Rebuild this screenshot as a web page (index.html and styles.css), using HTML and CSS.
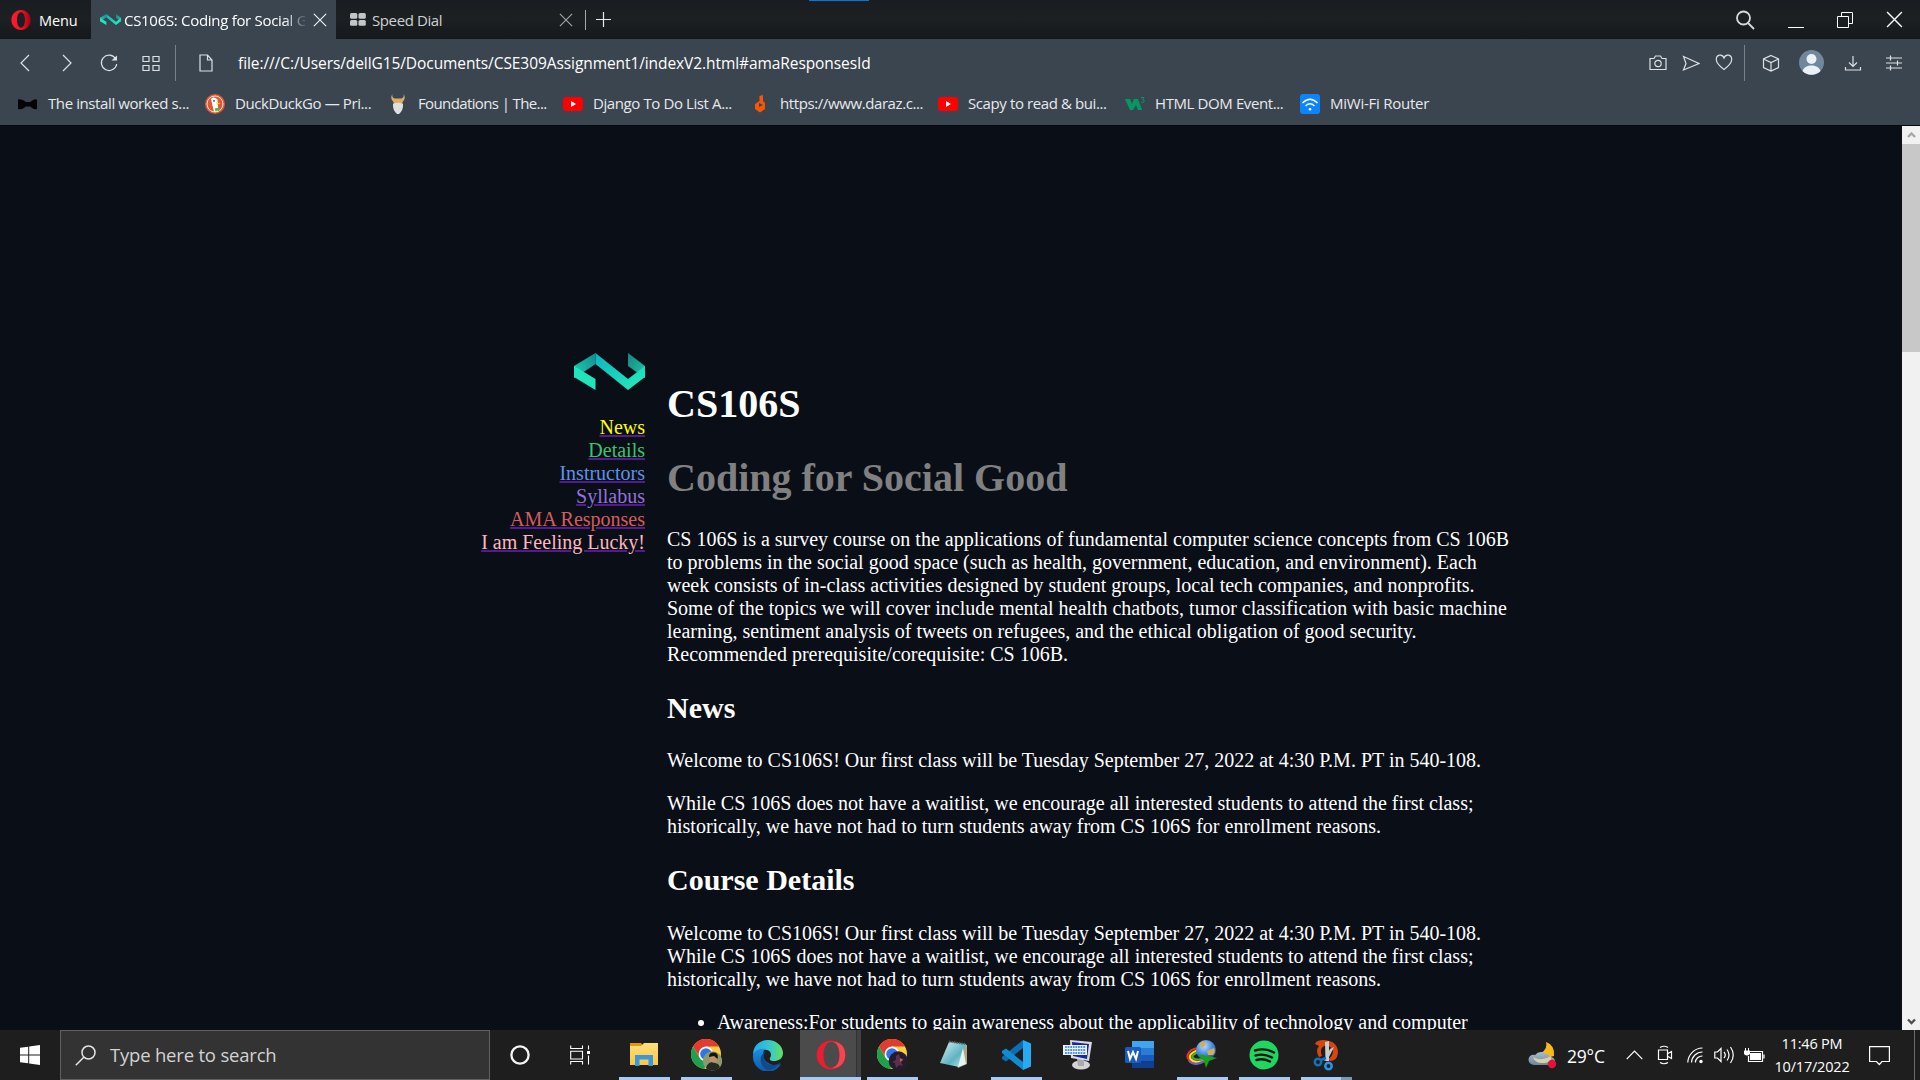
FILE: index.html
```html
<!DOCTYPE html>
<html lang="en">
<head>
<meta charset="utf-8">
<title>CS106S: Coding for Social Good</title>
<link rel="stylesheet" href="styles.css">
</head>
<body>
<svg class="defs" width="0" height="0">
  <defs>
    <linearGradient id="gBand" x1="0" y1="0" x2="1" y2="1"><stop offset="0" stop-color="#0fb3bd"/><stop offset="1" stop-color="#22f0bd"/></linearGradient>
    <linearGradient id="gDark" x1="0" y1="1" x2="1" y2="0"><stop offset="0" stop-color="#22d3ae"/><stop offset="1" stop-color="#0e8b94"/></linearGradient>
    <linearGradient id="gRight" x1="0" y1="0" x2="1" y2="1"><stop offset="0" stop-color="#15857f"/><stop offset="1" stop-color="#22c7a4"/></linearGradient>
    <linearGradient id="gOpera" x1="0" y1="0" x2="1" y2="0"><stop offset="0" stop-color="#ff1b2d"/><stop offset=".5" stop-color="#f0142a"/><stop offset="1" stop-color="#a70014"/></linearGradient>
    <linearGradient id="gEdge" x1="0" y1="0" x2="1" y2="0"><stop offset="0" stop-color="#2aa7e8"/><stop offset=".55" stop-color="#35c8d0"/><stop offset="1" stop-color="#62e25a"/></linearGradient>
    <linearGradient id="gEdgeB" x1="0" y1="0" x2="0" y2="1"><stop offset="0" stop-color="#1a8fe0"/><stop offset="1" stop-color="#0c59a8"/></linearGradient>
    <linearGradient id="gFolder" x1="0" y1="0" x2="0" y2="1"><stop offset="0" stop-color="#ffdf7e"/><stop offset="1" stop-color="#fbc643"/></linearGradient>
    <linearGradient id="gPad" x1="0" y1="0" x2="1" y2="1"><stop offset="0" stop-color="#d5f0f4"/><stop offset=".6" stop-color="#5fb3c2"/><stop offset="1" stop-color="#c9e9ee"/></linearGradient>
    <linearGradient id="gCloud" x1="0" y1="0" x2="0" y2="1"><stop offset="0" stop-color="#a9bccd"/><stop offset="1" stop-color="#71859a"/></linearGradient>
    <radialGradient id="gGlobe" cx=".4" cy=".3" r=".8"><stop offset="0" stop-color="#b9dcff"/><stop offset=".5" stop-color="#4d8fe0"/><stop offset="1" stop-color="#173f8f"/></radialGradient>
    <symbol id="ribbon" viewBox="0 0 71 37">
      <path d="M0 13 21.500 0V11L8 20 0 25Z" fill="url(#gDark)"/>
      <path d="M0 13V24L21.500 37V26Z" fill="#20e5bb"/>
      <path d="M54 0 71 13V25L54 13Z" fill="url(#gRight)"/>
      <path d="M71 13V24L54 37 21.500 11V0L54 26Z" fill="url(#gBand)"/>
    </symbol>
    <symbol id="cross" viewBox="0 0 16 16"><path d="M1 1 15 15M15 1 1 15" fill="none" stroke="currentColor" stroke-width="1.300"/></symbol>
    <symbol id="tube" viewBox="0 0 20 20"><rect y="3" width="20" height="14" rx="3.500" fill="#f00"/><path d="M8 7v6l5-3z" fill="#fff"/></symbol>
    <symbol id="chrome" viewBox="0 0 32 32">
      <circle cx="15" cy="15" r="15" fill="#ffcd40"/>
      <path d="M2 7.500 8.500 18.500 15 22 13.500 30A15 15 0 0 1 2 7.500Z" fill="#1fa04d"/>
      <path d="M2 7.500A15 15 0 0 1 28 7.500H15L8.500 18Z" fill="#e33b2e"/>
      <circle cx="15" cy="15" r="7.400" fill="#fff"/><circle cx="15" cy="15" r="5.800" fill="#2f74e8"/>
    </symbol>
  </defs>
</svg>
<div class="desktop">
  <header class="titlebar">
    <div class="screen-edge"></div>
    <div class="menu">
      <svg width="20" height="20" viewBox="0 0 20 20"><path fill="url(#gOpera)" fill-rule="evenodd" d="M10 0c5.500 0 9.600 4.400 9.600 10S15.500 20 10 20 .4 15.600.4 10 4.500 0 10 0Zm0 2.300C7.600 2.300 6 5.800 6 10s1.600 7.700 4 7.700 4-3.500 4-7.700-1.600-7.700-4-7.700Z"/></svg>
      <span>Menu</span>
    </div>
    <div class="tab tab-active">
      <svg width="21" height="11"><use href="#ribbon"/></svg>
      <span class="tab-title fade">CS106S: Coding for Social Good</span>
      <svg class="tab-close" width="14" height="14"><use href="#cross"/></svg>
    </div>
    <div class="tab">
      <svg width="16" height="13" viewBox="0 0 16 13" fill="#c3c6c9"><rect width="7.300" height="5.800" rx="1.500"/><rect x="8.500" width="7.300" height="5.800" rx="1.500"/><rect y="7" width="7.300" height="5.800" rx="1.500"/><rect x="8.500" y="7" width="7.300" height="5.800" rx="1.500"/></svg>
      <span class="tab-title">Speed Dial</span>
      <svg class="tab-close" width="14" height="14"><use href="#cross"/></svg>
    </div>
    <div class="tab-sep"></div>
    <svg class="plus" width="15" height="15" viewBox="0 0 15 15"><path d="M7.500 0V15M0 7.500H15" stroke="#e8eaeb" stroke-width="1.200"/></svg>
    <div class="window-controls">
      <svg width="20" height="20" viewBox="0 0 20 20" fill="none" stroke="#d6dadc" stroke-width="1.800"><circle cx="8.500" cy="8" r="6.500"/><path d="m13 13 6 6"/></svg>
      <svg width="16" height="16" viewBox="0 0 16 16" stroke="#fff"><path d="M0 15.500H16"/></svg>
      <svg width="16" height="16" viewBox="0 0 16 16" fill="none" stroke="#fff"><path d="M.5 4.500H11.500V15.500H.5ZM4.500 4V.5H15.500V11.500H12"/></svg>
      <svg width="17" height="17"><use href="#cross"/></svg>
    </div>
  </header>

  <div class="toolbar">
    <div class="nav-buttons">
      <svg width="20" height="20" viewBox="0 0 20 20"><path d="M14 2 6 10l8 8"/></svg>
      <svg width="20" height="20" viewBox="0 0 20 20"><path d="m6 2 8 8-8 8"/></svg>
      <svg width="20" height="20" viewBox="0 0 20 20"><path d="M16.500 5.500A7.700 7.700 0 1 0 17.700 11"/><path d="M18 2.500V7.500H12.500Z" fill="#dfe3e6" stroke="none"/></svg>
      <svg width="20" height="20" viewBox="0 0 20 20"><path d="M2 3.500H8V8.500H2ZM12 3.500H18V8.500H12ZM2 12.500H8V17.500H2ZM12 12.500H18V17.500H12Z"/></svg>
    </div>
    <div class="bar-sep"></div>
    <svg class="file-icon" width="14" height="18" viewBox="0 0 14 18"><path d="M1 1H8.500L13 6V17H1ZM8.500 1V6H13"/></svg>
    <span class="url">file:///C:/Users/dellG15/Documents/CSE309Assignment1/indexV2.html#amaResponsesId</span>
    <div class="page-actions">
      <svg width="18" height="18" viewBox="0 0 18 18"><path d="M1 4.500H5L6.500 2H11.500L13 4.500H17V15.500H1Z"/><circle cx="9" cy="9.500" r="3.200"/></svg>
      <svg width="18" height="18" viewBox="0 0 18 18"><path d="M1.500 2.500 17 9.500 1.500 16 4 9.500Z"/></svg>
      <svg width="18" height="18" viewBox="0 0 18 18"><path d="M9 15.500C5 12.500 1.300 9 1.300 5.500c0-5 6-6 7.700-1.500 1.700-4.500 7.700-3.500 7.700 1.500C16.700 9 13 12.500 9 15.500Z"/></svg>
    </div>
    <div class="bar-sep"></div>
    <div class="browser-actions">
      <svg width="18" height="18" viewBox="0 0 18 18"><path d="M9 1.500 16.500 5V13.500L9 17 1.500 13.500V5ZM1.500 5 9 8.500 16.500 5M9 8.500V17"/></svg>
      <svg width="25" height="25" viewBox="0 0 25 25" stroke="none"><circle cx="12.500" cy="12.500" r="12.500" fill="#71879c"/><circle cx="12.500" cy="9" r="5" fill="#eaf1f7"/><path d="M3.500 21C5 17 8.500 15.500 12.500 15.500S20 17 21.500 21A12.500 12.500 0 0 1 3.500 21Z" fill="#eaf1f7"/></svg>
      <svg width="18" height="18" viewBox="0 0 18 18"><path d="M9 2V12M5 8.500 9 12.500 13 8.500M1.500 13V16H16.500V13"/></svg>
      <svg width="18" height="18" viewBox="0 0 18 18"><path d="M1 4H17M1 9H17M1 14H17M5.500 1.500V6.500M12.500 6.500V11.500M5.500 11.500V16.500"/></svg>
    </div>
  </div>

  <nav class="bookmarks">
    <div class="bookmark"><svg width="20" height="20" viewBox="0 0 20 20"><path d="M0 5.500Q4 4.500 8 8H12Q16 4.500 19 5.500V15Q16 16 12 12.500H8Q4 16 0 15Z" fill="#050505"/></svg><span>The install worked s...</span></div>
    <div class="bookmark"><svg width="20" height="20" viewBox="0 0 20 20"><circle cx="10" cy="10" r="10" fill="#de5833"/><circle cx="10" cy="10" r="8" fill="none" stroke="#fff" stroke-width=".8"/><path d="M6 5Q9 2 12.500 5.500L13 11V17L9 18Z" fill="#fff"/><path d="m11.500 8.500 4 .7-3.500 1.800z" fill="#fdd20a"/><path d="m9.500 14.500 5-1v3l-4 .5z" fill="#4cba3c"/><circle cx="9" cy="6.800" r=".9" fill="#335"/></svg><span>DuckDuckGo — Pri...</span></div>
    <div class="bookmark narrow"><svg width="20" height="20" viewBox="0 0 20 20"><path d="M4.500 0Q3.500 3 6.500 4.500H13.500Q16.500 3 15.500 0 18.500 4 14.500 8V11H5.500V8Q1.500 4 4.500 0Z" fill="#dcac68"/><path d="M5 10Q10 7.500 15 10 15.500 16 11 20H9Q4.500 16 5 10Z" fill="#dfdfe0"/></svg><span>Foundations | The...</span></div>
    <div class="bookmark"><svg width="20" height="20"><use href="#tube"/></svg><span>Django To Do List A...</span></div>
    <div class="bookmark"><svg width="20" height="20" viewBox="0 0 20 20"><path fill-rule="evenodd" d="M9.500 2 13 1V7L15 9V15L10 18.500 5 15V10L9.500 7ZM9 9V13L13 11Z" fill="#f85606"/></svg><span>https://www.daraz.c...</span></div>
    <div class="bookmark"><svg width="20" height="20"><use href="#tube"/></svg><span>Scapy to read &amp; bui...</span></div>
    <div class="bookmark"><svg width="20" height="20" viewBox="0 0 20 20"><path d="M0 5H5L7 10 9 5H13L17 16H13L11 11 8 16H5Z" fill="#059862"/><path d="M16 3.500H19L17.500 5.500Q20 6 19 8 17.500 9 16 8" stroke="#059862" fill="none"/></svg><span>HTML DOM Event...</span></div>
    <div class="bookmark wide"><svg width="20" height="20" viewBox="0 0 20 20"><rect width="20" height="20" rx="3" fill="#0d84ff"/><path d="M2.500 9Q10 1.500 17.500 9M5.500 12Q10 7.500 14.500 12" fill="none" stroke="#fff" stroke-width="1.400"/><circle cx="10" cy="15.300" r="1.300" fill="#fff"/></svg><span>MiWi-Fi Router</span></div>
  </nav>

  <div class="viewport">
    <div class="page">
      <aside class="side">
        <svg width="71" height="37"><use href="#ribbon"/></svg>
        <a class="yellow">News</a>
        <a class="green">Details</a>
        <a class="blue">Instructors</a>
        <a class="purple">Syllabus</a>
        <a class="red">AMA Responses</a>
        <a class="pink">I am Feeling Lucky!</a>
      </aside>
      <main class="content">
        <h1>CS106S</h1>
        <h1 class="muted">Coding for Social Good</h1>
        <p>CS 106S is a survey course on the applications of fundamental computer science concepts from CS 106B<br>to problems in the social good space (such as health, government, education, and environment). Each<br>week consists of in-class activities designed by student groups, local tech companies, and nonprofits.<br>Some of the topics we will cover include mental health chatbots, tumor classification with basic machine<br>learning, sentiment analysis of tweets on refugees, and the ethical obligation of good security.<br>Recommended prerequisite/corequisite: CS 106B.</p>
        <h2 class="tight">News</h2>
        <p>Welcome to CS106S! Our first class will be Tuesday September 27, 2022 at 4:30 P.M. PT in 540-108.</p>
        <p>While CS 106S does not have a waitlist, we encourage all interested students to attend the first class;<br>historically, we have not had to turn students away from CS 106S for enrollment reasons.</p>
        <h2>Course Details</h2>
        <p>Welcome to CS106S! Our first class will be Tuesday September 27, 2022 at 4:30 P.M. PT in 540-108.<br>While CS 106S does not have a waitlist, we encourage all interested students to attend the first class;<br>historically, we have not had to turn students away from CS 106S for enrollment reasons.</p>
        <ul><li>Awareness:For students to gain awareness about the applicability of technology and computer</li></ul>
      </main>
    </div>
    <div class="scrollbar">
      <svg width="18" height="18" viewBox="0 0 18 18"><path d="m6 11 3.500-3.500L13 11" fill="none" stroke="#a8a8a8" stroke-width="2.400"/></svg>
      <div class="thumb"></div>
      <svg width="18" height="18" viewBox="0 0 18 18"><path d="m6 7.500 3.500 3.500L13 7.500" fill="none" stroke="#505050" stroke-width="2.400"/></svg>
    </div>
  </div>

  <footer class="taskbar">
    <div class="start"><svg width="20" height="20" viewBox="0 0 20 20" fill="#fff"><path d="M0 2.800 8.200 1.700V9.500H0ZM9.200 1.500 20 0V9.500H9.200ZM0 10.500H8.200V18.300L0 17.200ZM9.200 10.500H20V20L9.200 18.500Z"/></svg></div>
    <div class="search">
      <svg width="21" height="21" viewBox="0 0 21 21" fill="none" stroke="#e4e4e4" stroke-width="1.500"><circle cx="13.500" cy="7.500" r="6.500"/><path d="M9 12 .8 20.200"/></svg>
      <span>Type here to search</span>
    </div>
    <div class="cell"><svg width="20" height="20" viewBox="0 0 20 20"><circle cx="10" cy="10" r="8.600" fill="none" stroke="#f4f4f4" stroke-width="2.300"/></svg></div>
    <div class="cell"><svg width="21" height="20" viewBox="0 0 21 20" fill="none" stroke="#fff" stroke-width="1.100"><path d="M.7.500V3.500H12.500V.5M.7 6.200H12.500V14H.7ZM.7 19.500V16.500H12.500V19.500M18.500.5V4.500M18.500 10.500V19.500"/><path d="M17 6H20V9H17Z" fill="#fff" stroke="none"/></svg></div>
    <div class="apps">
      <div class="app open"><svg width="32" height="32" viewBox="0 0 32 32"><path d="M2 4H13L15 6.500V13H2Z" fill="#dd9b0b"/><path d="M2 7H13L16 4H30V26H2Z" fill="url(#gFolder)"/><path d="M7 27V16H25V27H20.500V20.500H11.500V27Z" fill="#3b96da"/></svg></div>
      <div class="app open"><svg width="32" height="32" viewBox="0 0 32 32"><use href="#chrome" x="1" width="32" height="32"/><circle cx="22.500" cy="22" r="9.700" fill="#8c9a6b"/><path d="M16 29.200Q17 24 22 23L28 25 30 28A9.700 9.700 0 0 1 16 29.200Z" fill="#252a26"/><circle cx="23.500" cy="20" r="3.500" fill="#c58f6c"/><path d="M19 18Q19 13 24 13.500 29 14 27.500 20L24 17Z" fill="#15130f"/></svg></div>
      <div class="app"><svg width="32" height="32" viewBox="0 0 32 32"><path d="M1 15C1.500 6 8 1 16 1s15 6 15 13c0 6-5 8-9 8-3 0-5-1-4-3 2-3 1-7-3-8C9 10 3 12 1 16Z" fill="url(#gEdge)"/><path d="M1 16C3 11 8 9 13 10c-3 3-4 13 8 16 3 1 6 0 8-1A15 15 0 0 1 1 16Z" fill="url(#gEdgeB)"/><path d="M13 13c-4 6 1 13 8 13 3 0 5-1 8-3-3 5-8 8-13 8-7-2-11-13-3-18Z" fill="#114a8b"/></svg></div>
      <div class="app open current"><svg width="32" height="32" viewBox="0 0 32 32"><path fill-rule="evenodd" d="M16 1.500c8 0 14.300 6.500 14.300 14.500S24 30.500 16 30.500 1.700 24 1.700 16 8 1.500 16 1.500Zm2 1.500C11 2 8 10 8.500 18c.5 7 4 12 9 10.500 5-1 7.500-7 7-14C24 8 22 4 18 3Z" fill="#ed1c2e"/><path d="M18 3C26 2 30.300 9 30.300 16S25 30 17 28.800c5-1 8-6 7.500-14C24 8 22 4 18 3Z" fill="#fb4350"/></svg></div>
      <div class="app open"><svg width="32" height="32" viewBox="0 0 32 32"><use href="#chrome" x="1" width="32" height="32"/><circle cx="22.300" cy="22" r="9.700" fill="#251b2c"/><path d="m20 17 3-2 1 4 4 1-3 3 2 4-4-1-3 3-1-5-3-1 4-2z" fill="#5b2f4e"/><path d="m24 19 3 2-3 2z" fill="#c2653f"/></svg></div>
      <div class="app"><svg width="32" height="32" viewBox="0 0 32 32"><path d="M12 3 29 6V25L20 29Z" fill="#b4a57c"/><path d="M11 3 28 5 21 28 2 24Z" fill="url(#gPad)"/><path d="M11 2.500 27 5" stroke="#5c6468" stroke-width="2" stroke-dasharray="1.500 1"/><path d="M25 9 28 25 20 28Z" fill="#e3f4f5"/></svg></div>
      <div class="app open"><svg width="32" height="32" viewBox="0 0 32 32"><path d="M23 1 31 4.500V27.500L23 31Z" fill="#2aa9f3"/><path d="M23 1V9L6 22.500 2 20V18Z" fill="#0a6fb5"/><path d="M23 31V23L6 9.500 2 12V14Z" fill="#118bd2"/></svg></div>
      <div class="app"><svg width="32" height="32" viewBox="0 0 32 32"><ellipse cx="19" cy="26" rx="9" ry="4.500" fill="#d4d4d4"/><path d="M15 20H22V27H16Z" fill="#aaa"/><path d="M8 1 30 3 27 22 9 19Z" fill="#dadada"/><path d="M10 3 27 5 25 20 11 17Z" fill="#1327ae"/><path d="M1 6H25V16H1Z" fill="#edf2f8"/><path d="M3 8H24M3 11H24M3 14H24" stroke="#5594d8" stroke-width="1.800" stroke-dasharray="1.800 .8"/></svg></div>
      <div class="app"><svg width="32" height="32" viewBox="0 0 32 32"><path d="M8 2H30V9H8Z" fill="#41a5ee"/><path d="M8 9H30V16H8Z" fill="#2b7cd3"/><path d="M8 16H30V22.500H8Z" fill="#185abd"/><path d="M8 22.500H30V29H8Z" fill="#103f91"/><rect x="1" y="8" width="16" height="16" rx="1.500" fill="#1c5abc"/><path d="m4 12 2 8 3-7 3 7 2-8" stroke="#fff" stroke-width="2" fill="none"/></svg></div>
      <div class="app open"><svg width="32" height="32" viewBox="0 0 32 32"><g fill="none" stroke-width="2.200"><path d="M14 9C4 9-1 16 3 21s12 4 17 0" stroke="#e53422"/><path d="M14 11C6 12 2 17 5 20.500s10 3 15 0" stroke="#fbde28"/><path d="M14 13C8 14 5 17 7 19s8 2 13 0" stroke="#4eae22"/><path d="M3 22Q9 28 18 22" stroke="#705cc4"/></g><circle cx="20" cy="11" r="10" fill="url(#gGlobe)"/><path d="M13 5Q18 0 20 5L17 9ZM21 12 28 9Q30 13 27 16L22 16Z" fill="#d4ae52"/><path d="M12 15 31 19 23 22 20 29 18 22Z" fill="#16a41e"/></svg></div>
      <div class="app open"><svg width="32" height="32" viewBox="0 0 32 32"><circle cx="16" cy="16" r="14.500" fill="#1ed760"/><path d="M7 11.500Q17 8.500 26 13.500M7.500 16.500Q16 14 24 18.500M8.500 21Q15 19 22 22.500" stroke="#111" stroke-width="2.400" fill="none" stroke-linecap="round"/></svg></div>
      <div class="app open multi"><svg width="32" height="32" viewBox="0 0 32 32"><path d="M5 5Q6 1 14 1 28 2 28 14 27 22 20 22L18 20Q23 17 23 12 21 6 14 7 9 10 12 17L9 18Q5 12 9 7Z" fill="#d9440f"/><path d="M15 3 19 2V22H15.500ZM24 8 18 20 14 22 20 10Z" fill="#c8cdd2"/><circle cx="8" cy="23" r="3.200" fill="none" stroke="#1371b9" stroke-width="2.500"/><circle cx="18.500" cy="27" r="3.200" fill="none" stroke="#2396e8" stroke-width="2.500"/><path d="m11 21 5-2" stroke="#1371b9" stroke-width="2.500"/></svg></div>
    </div>
    <div class="tray">
      <svg width="30" height="28" viewBox="0 0 30 28"><path d="M18 1Q27 4 26 15L18 17 13 12Q20 8 18 1Z" fill="#fdb913"/><path d="M6 24Q0 23 .5 18 2 13 7 14 11 9 17 12 22 13 22 16 27 16 27 21 26 24 22 24Z" fill="url(#gCloud)"/><path d="M5 16Q14 21 23 15 25 22 14 22 7 22 5 16Z" fill="#d6d1a9"/><circle cx="24" cy="23" r="4.200" fill="#e5113a"/></svg>
      <span class="temp">29°C</span>
      <svg class="chev" width="17" height="10" viewBox="0 0 17 10"><path d="M.7 9.200 8.500 1l7.800 8.200"/></svg>
      <svg class="meet" width="16" height="20" viewBox="0 0 16 20"><path d="M1.500 5H10.500V14.500H1.500ZM11 8.500 14.500 6.500V13.500L11 11.500M3 2.500Q7 0 11 2.500M3 17.500Q7 20 11 17.500"/></svg>
      <svg class="wifi" width="17" height="17" viewBox="0 0 17 17"><path d="M.8 15.500A15 15 0 0 1 15.500 1M4.500 15.500A11 11 0 0 1 15.500 5M8.300 15.500A7 7 0 0 1 15.500 9"/><circle cx="14" cy="14.500" r="1.700" fill="#fff" stroke="none"/></svg>
      <svg class="vol" width="21" height="20" viewBox="0 0 21 20"><path d="M.8 7H3.500L7 3.500V16.500L3.500 13H.8ZM10 7Q12.500 10 10 13M13 4.500Q17 10 13 15.500M16.500 2Q22 10 16.500 18"/></svg>
      <svg class="bat" width="21" height="15" viewBox="0 0 21 15"><path d="M5 3.500H18.500V13.500H4.500V8M20 6.500V10.500"/><path d="M6 5H17V12H6ZM0 2.500H6V6Q3 9 0 6ZM1 0H2V3H1ZM4 0H5V3H4Z" fill="#fff" stroke="none"/></svg>
      <div class="clock"><span>11:46 PM</span><span>10/17/2022</span></div>
      <svg class="note" width="21" height="21" viewBox="0 0 21 21"><path d="M.6 1.600H20.400V16.500H13L10.300 19.500 7.500 16.500H.6Z"/></svg>
      <div class="peek"></div>
    </div>
  </footer>
</div>
</body>
</html>
```
FILE: styles.css
```css
* { box-sizing: border-box; }
body { margin: 0; background: #0a0e17; font-family: "Open Sans", "Noto Sans", sans-serif; }
svg { display: block; flex: none; }
.defs { position: absolute; }
.desktop { width: 1920px; height: 1080px; display: flex; flex-direction: column; overflow: hidden; }

/* tab strip */
.titlebar { position: relative; height: 39px; flex: none; display: flex; align-items: center; background: linear-gradient(#191d21, #1c2022 50%, #15181c); color: #e9ebec; font-size: 15px; letter-spacing: -.4px; white-space: nowrap; }
.screen-edge { position: absolute; left: 809px; top: 0; width: 60px; height: 1px; background: #0078d7; }
.menu { width: 91px; height: 39px; padding-left: 11px; display: flex; align-items: center; gap: 8px; color: #fff; padding-top: 1px; font-size: 14.5px; letter-spacing: -.15px; }
.tab { width: 249px; height: 39px; padding: 0 15px 0 14px; display: flex; align-items: center; gap: 6px; color: #ced1d3; }
.tab-active { width: 245px; padding: 0 9px; gap: 3px; background: #3b4550; color: #fff; }
.tab-active .tab-close { color: #f0f2f3; }
.tab-title { flex: none; }
.fade { width: 181px; overflow: hidden; letter-spacing: -.3px; -webkit-mask-image: linear-gradient(90deg, #000 160px, transparent 184px); mask-image: linear-gradient(90deg, #000 160px, transparent 184px); }
.tab-close { margin-left: auto; color: #a1a5a8; }
.tab + .tab .tab-close { margin-right: -3px; }
.tab-sep { width: 1px; height: 20px; background: #a2abb2; }
.plus { margin-left: 10px; }
.window-controls { margin-left: auto; padding-right: 17px; display: flex; align-items: center; gap: 33px; color: #fff; }

/* address bar */
.toolbar { height: 47px; flex: none; display: flex; align-items: center; background: #3b4550; padding-right: 6px; }
.toolbar svg { fill: none; stroke: #dce0e3; stroke-width: 1.2; }
.nav-buttons { display: flex; width: 171px; padding-left: 4px; }
.nav-buttons svg { margin: 0 11px; }
.bar-sep { width: 1px; height: 36px; background: #78818a; margin: 0 5px 0 4px; }
.file-icon { margin-left: 18px; }
.url { margin-left: 25px; color: #fff; font-size: 15.5px; letter-spacing: -.08px; white-space: nowrap; }
.page-actions { margin-left: auto; display: flex; gap: 15px; padding-right: 7px; }
.browser-actions { display: flex; align-items: center; }
.browser-actions svg { margin: 0 11.5px; }
.browser-actions svg:nth-child(2) { margin: 0 8px; stroke: none; }

/* bookmarks */
.bookmarks { height: 39px; flex: none; display: grid; grid-template-columns: 187px 183px 175px 187px 188px 187px 175px 200px; padding-left: 18px; background: #3b4550; color: #e7e9eb; font-size: 15px; letter-spacing: -.4px; }
.bookmark { display: flex; align-items: center; gap: 10px; white-space: nowrap; padding-bottom: 4px; }
.bookmark span { padding-bottom: 1px; }
.narrow { letter-spacing: -.62px; }
.wide { letter-spacing: -.25px; }

/* course page */
.viewport { height: 905px; flex: none; display: flex; justify-content: space-between; overflow: hidden; border-top: 1px solid #050810; }
.page { width: 1902px; height: 904px; padding: 227px 0 0 465px; display: grid; grid-template-columns: 180px 850px; column-gap: 22px; overflow: hidden; color: #fff; font: 20px/23px "Liberation Serif", "Times New Roman", serif; }
.side { display: flex; flex-direction: column; align-items: flex-end; }
.side svg { margin-bottom: 26px; }
.side a { white-space: nowrap; text-decoration: underline; text-decoration-color: #551a8b; text-decoration-thickness: 2px; }
.yellow { color: #ffff00; }
.green { color: #3cc371; }
.blue { color: #5b94e6; }
.purple { color: #9273db; }
.red { color: #d65c5c; }
.pink { color: #ffb6c1; }
.content { white-space: nowrap; }
h1 { font-size: 40px; line-height: 46px; margin: 28px 0; font-weight: bold; }
h2 { font-size: 30px; line-height: 34px; margin: 25px 0; font-weight: bold; }
.tight { margin-bottom: 24px; }
.muted { color: #808080; margin-bottom: 27px; }
p { margin: 20px 0; }
ul { margin: 20px 0; padding-left: 50px; }
.scrollbar { width: 18px; height: 904px; background: #f1f1f1; display: flex; flex-direction: column; }
.scrollbar svg:last-child { margin-top: auto; }
.thumb { height: 208px; background: #c8c8c8; }

/* taskbar */
.taskbar { height: 50px; flex: none; display: flex; align-items: center; background: #1e1e1e; color: #fff; }
.start { width: 60px; padding-left: 20px; }
.search { width: 430px; height: 50px; padding-left: 14px; display: flex; align-items: center; gap: 14px; background: #333; border: 1px solid #606060; color: #d2d2d2; font-size: 18.5px; letter-spacing: -.2px; }
.search span { padding-bottom: 2px; }
.cell { width: 60px; display: flex; justify-content: center; }
.apps { display: grid; grid-template-columns: repeat(12, 62px); margin-left: 3px; }
.app { height: 50px; display: flex; flex-direction: column; align-items: center; padding-top: 9px; }
.open::after { content: ""; width: 51px; height: 3px; margin-top: 6px; background: #a3ccf8; }
.current { width: 61px; margin-left: 1px; background: linear-gradient(90deg, #4b4b4b 56px, #313131 56px, #313131 57px, #414141 57px); }
.current::after { width: 61px; }
.multi::after { background: linear-gradient(90deg, #a3ccf8 40px, #7898b5 40px); }
.tray { margin-left: auto; display: flex; align-items: center; height: 50px; }
.tray .chev, .tray .meet, .tray .wifi, .tray .vol, .tray .bat, .tray .note { fill: none; stroke: #fff; stroke-width: 1.2; }
.temp { font-size: 17.5px; letter-spacing: -.2px; width: 38px; margin: 1px 21px 0 9px; white-space: nowrap; }
.meet { margin-left: 14px; }
.wifi { margin-left: 14px; }
.vol { margin-left: 10px; }
.bat { margin-left: 9px; }
.clock { width: 94px; display: flex; flex-direction: column; align-items: center; font-size: 14.5px; line-height: 23px; letter-spacing: -.2px; }
.note { margin-left: 10px; }
.peek { width: 1px; height: 50px; margin: 0 5px 0 24px; background: #6c6c6c; }
```
